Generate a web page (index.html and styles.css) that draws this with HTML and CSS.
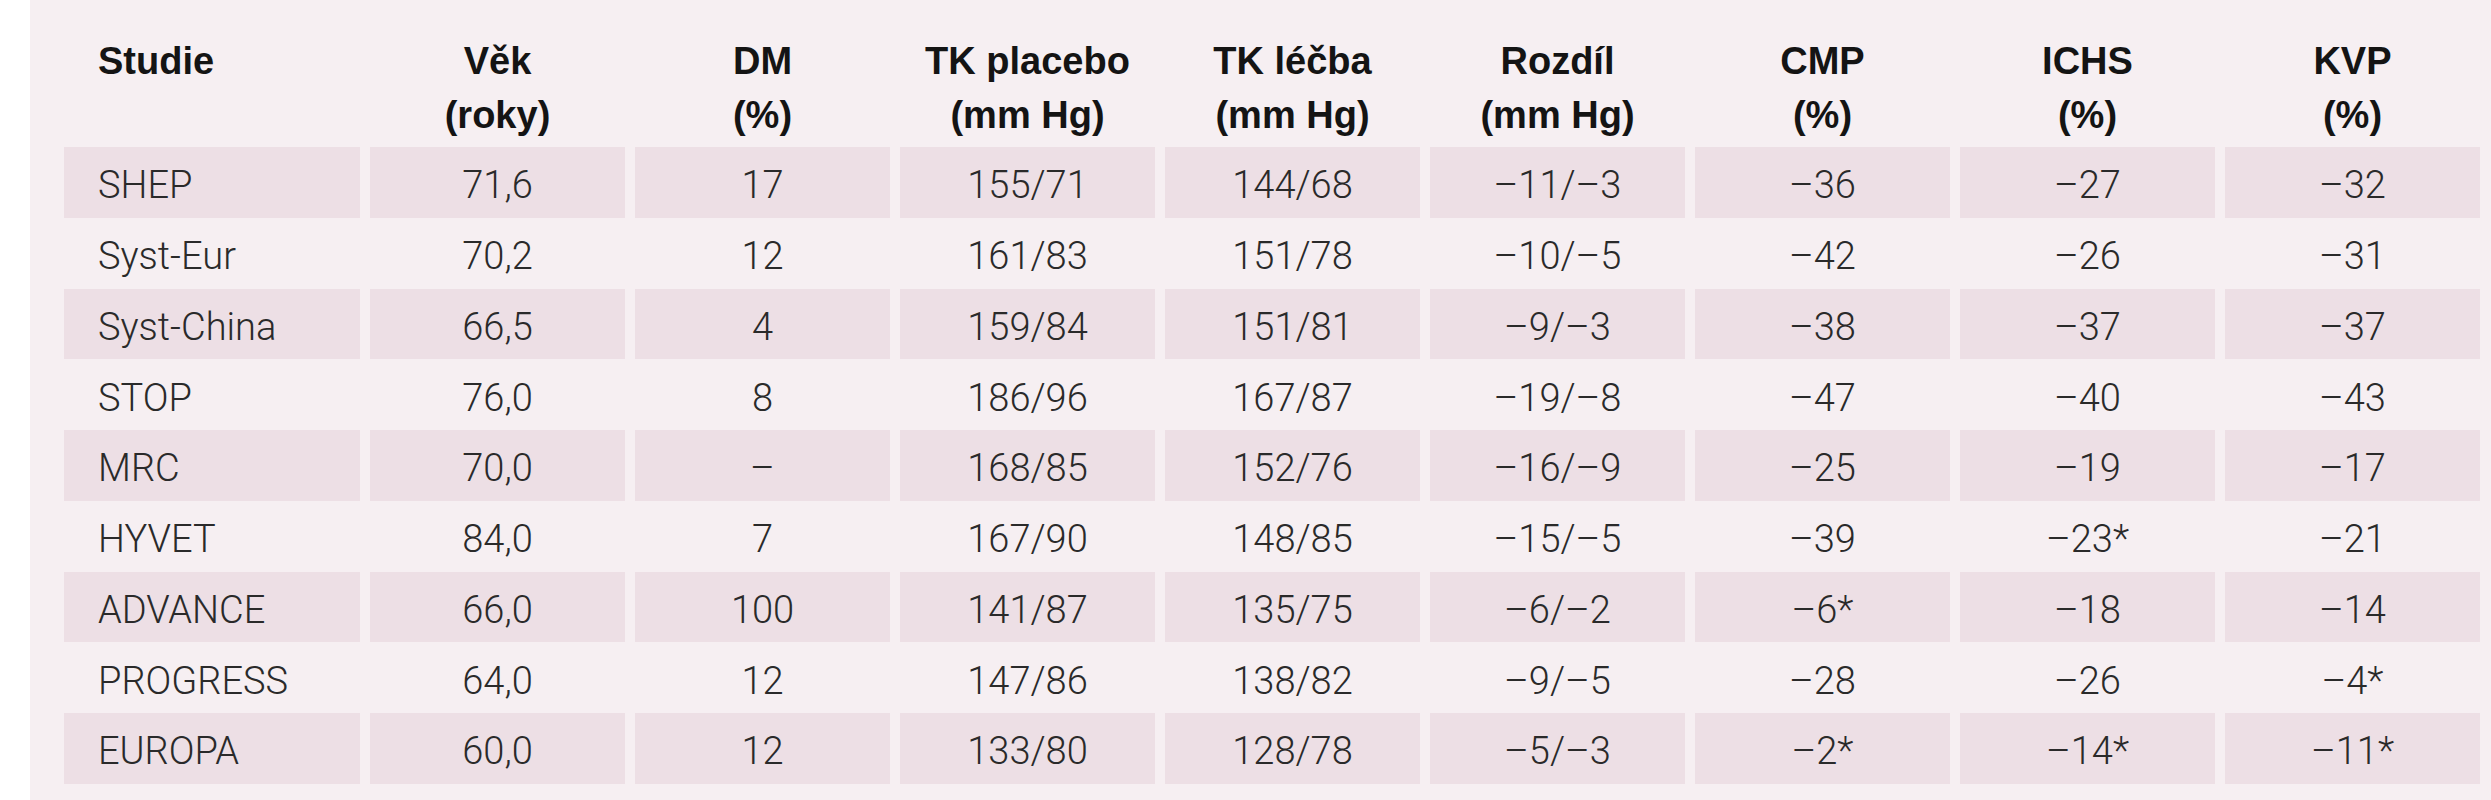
FILE: index.html
```html
<!DOCTYPE html>
<html lang="cs">
<head>
<meta charset="utf-8">
<title>Studie</title>
<link rel="stylesheet" href="styles.css">
</head>
<body>
<div class="panel">
  <table class="data">
    <colgroup>
      <col class="c-first">
      <col class="c-num"><col class="c-num"><col class="c-num"><col class="c-num">
      <col class="c-num"><col class="c-num"><col class="c-num"><col class="c-num">
    </colgroup>
    <thead>
      <tr>
        <th class="name">Studie</th>
        <th>Věk<br>(roky)</th>
        <th>DM<br>(%)</th>
        <th>TK placebo<br>(mm Hg)</th>
        <th>TK léčba<br>(mm Hg)</th>
        <th>Rozdíl<br>(mm Hg)</th>
        <th>CMP<br>(%)</th>
        <th>ICHS<br>(%)</th>
        <th>KVP<br>(%)</th>
      </tr>
    </thead>
    <tbody>
      <tr><td class="name">SHEP</td><td>71,6</td><td>17</td><td>155/71</td><td>144/68</td><td>–11/–3</td><td>–36</td><td>–27</td><td>–32</td></tr>
      <tr><td class="name">Syst-Eur</td><td>70,2</td><td>12</td><td>161/83</td><td>151/78</td><td>–10/–5</td><td>–42</td><td>–26</td><td>–31</td></tr>
      <tr><td class="name">Syst-China</td><td>66,5</td><td>4</td><td>159/84</td><td>151/81</td><td>–9/–3</td><td>–38</td><td>–37</td><td>–37</td></tr>
      <tr><td class="name">STOP</td><td>76,0</td><td>8</td><td>186/96</td><td>167/87</td><td>–19/–8</td><td>–47</td><td>–40</td><td>–43</td></tr>
      <tr><td class="name">MRC</td><td>70,0</td><td>–</td><td>168/85</td><td>152/76</td><td>–16/–9</td><td>–25</td><td>–19</td><td>–17</td></tr>
      <tr><td class="name">HYVET</td><td>84,0</td><td>7</td><td>167/90</td><td>148/85</td><td>–15/–5</td><td>–39</td><td>–23*</td><td>–21</td></tr>
      <tr><td class="name">ADVANCE</td><td>66,0</td><td>100</td><td>141/87</td><td>135/75</td><td>–6/–2</td><td>–6*</td><td>–18</td><td>–14</td></tr>
      <tr><td class="name">PROGRESS</td><td>64,0</td><td>12</td><td>147/86</td><td>138/82</td><td>–9/–5</td><td>–28</td><td>–26</td><td>–4*</td></tr>
      <tr><td class="name">EUROPA</td><td>60,0</td><td>12</td><td>133/80</td><td>128/78</td><td>–5/–3</td><td>–2*</td><td>–14*</td><td>–11*</td></tr>
    </tbody>
  </table>
</div>
</body>
</html>
```

FILE: styles.css
```css
html, body {
  margin: 0;
  padding: 0;
  background: #ffffff;
}

body {
  width: 2491px;
  height: 800px;
  overflow: hidden;
}

.panel {
  margin-left: 30px;
  height: 800px;
  background: #f6eff2;
  padding-left: 24px;
  box-sizing: border-box;
}

.data {
  table-layout: fixed;
  width: 2436px;
  border-collapse: separate;
  border-spacing: 10px 0;
}

.c-first { width: 296px; }
.c-num { width: 255px; }

.data th {
  font-family: "Liberation Sans", Arial, sans-serif;
  font-weight: bold;
  font-size: 38px;
  line-height: 54px;
  color: #141414;
  text-align: center;
  vertical-align: top;
  padding: 34px 0 5px;
}

.data td {
  font-family: Roboto, "Liberation Sans", sans-serif;
  font-weight: 300;
  font-size: 38px;
  color: #2a2a2a;
  text-align: center;
  vertical-align: middle;
  height: 70.75px;
  padding: 6px 0 0;
  box-sizing: border-box;
}

.data .name {
  text-align: left;
  padding-left: 34px;
}

.data tbody tr:nth-child(odd) td {
  background: #eddfe5;
}
```
